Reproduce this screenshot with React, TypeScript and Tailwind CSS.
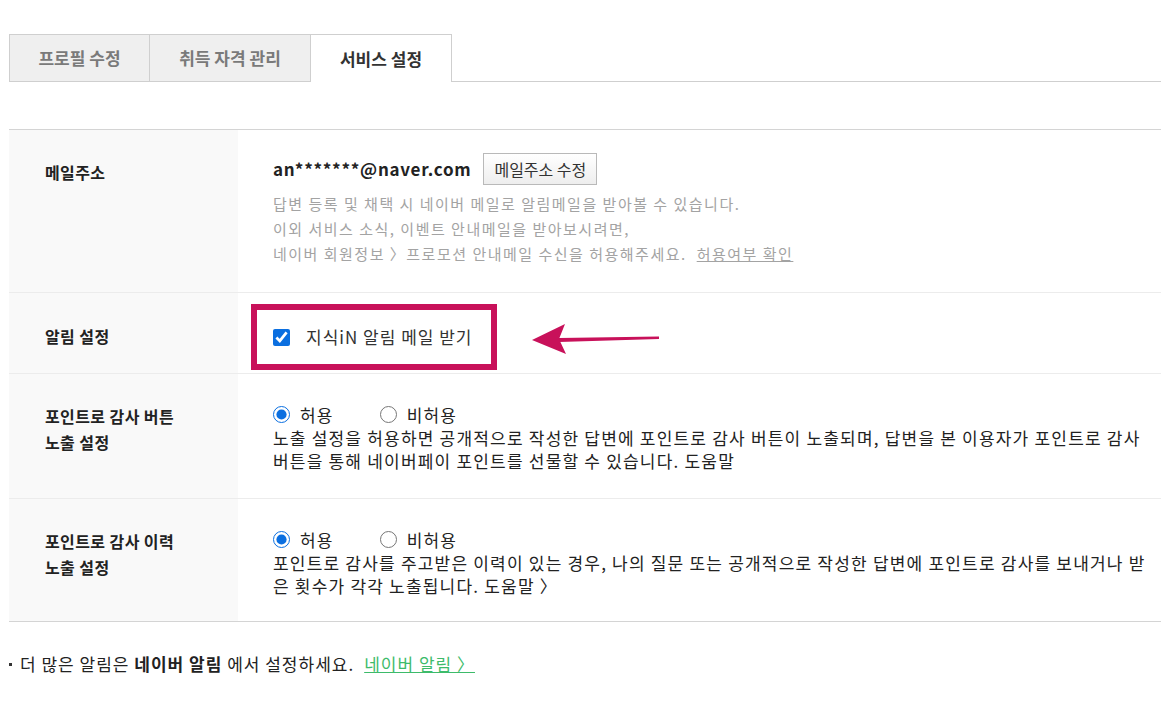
import React from "react";

const font = { fontFamily: '"Noto Sans CJK KR", "Noto Sans", sans-serif' };

const tabs = [
  { label: "프로필 수정", w: "w-[141px]", active: false },
  { label: "취득 자격 관리", w: "w-[161px]", active: false },
  { label: "서비스 설정", w: "w-[141px]", active: true },
];

const Radio = ({ name, checked, label }: { name: string; checked?: boolean; label: string }) => (
  <label className="flex items-center">
    <input
      type="radio"
      name={name}
      defaultChecked={checked}
      className="m-0 h-[17px] w-[17px] accent-[#0b6fe0]"
    />
    <span className="ml-[10px]">{label}</span>
  </label>
);

const Label = ({ children }: { children: React.ReactNode }) => (
  <div className="bg-[#f9f9f9] pl-[36px] text-[16px] font-bold leading-[26px] tracking-[0.4px] text-[#222]">
    {children}
  </div>
);

const App = () => {
  return (
    <div className="min-h-[710px] bg-white" style={font}>
      <div className="w-[1161px] pl-[9px] pt-[34px]">
        {/* tabs */}
        <div className="flex items-end">
          {tabs.map((t, i) => (
            <div
              key={t.label}
              className={
                t.active
                  ? `${t.w} flex h-[48px] items-center justify-center border-t border-r border-[#cfcfcf] bg-white text-[17px] font-bold text-[#333]`
                  : `${t.w} flex h-[48px] items-center justify-center border-t border-b border-r border-[#cfcfcf] bg-[#efefef] text-[17px] font-bold text-[#7a7a7a] ${i === 0 ? "border-l" : ""}`
              }
            >
              {t.label}
            </div>
          ))}
          <div className="h-px flex-1 bg-[#cfcfcf]" />
        </div>

        {/* settings table */}
        <div className="mt-[47px] border-t border-b border-[#d4d4d4]">
          {/* mail */}
          <div className="grid grid-cols-[229px_1fr] border-b border-[#ececec]">
            <Label>
              <div className="pt-[29px]">메일주소</div>
            </Label>
            <div className="pb-[26px] pl-[35px] pt-[23px]">
              <div className="flex h-[32px] items-center">
                <span className="text-[17px] font-semibold tracking-[0.7px] text-[#222]">an*******@naver.com</span>
                <button className="ml-[12px] h-[32px] w-[114px] border border-[#b9b9b9] bg-gradient-to-b from-white to-[#eeeeee] text-[16px] text-[#333]">
                  메일주소 수정
                </button>
              </div>
              <div className="mt-[6px] text-[15px] leading-[25px] tracking-[1.5px] text-[#a3a3a3]">
                <p>답변 등록 및 채택 시 네이버 메일로 알림메일을 받아볼 수 있습니다.</p>
                <p>이외 서비스 소식, 이벤트 안내메일을 받아보시려면,</p>
                <p>
                  네이버 회원정보 〉프로모션 안내메일 수신을 허용해주세요.
                  <a className="ml-[10px] underline">허용여부 확인</a>
                </p>
              </div>
            </div>
          </div>

          {/* notification */}
          <div className="relative grid grid-cols-[229px_1fr] border-b border-[#ececec]">
            <Label>
              <div className="pt-[30px]">알림 설정</div>
            </Label>
            <div className="pb-[3px] pl-[13px] pt-[11px]">
              <div className="flex h-[66px] w-[246px] items-center border-[6px] border-[#c8115a] pl-[16px]">
                <input
                  type="checkbox"
                  defaultChecked
                  className="m-0 h-[17px] w-[17px] accent-[#0b6fe0]"
                />
                <span className="ml-[16px] text-[17px] tracking-[1px] text-[#333]">지식iN 알림 메일 받기</span>
              </div>
            </div>
            <svg
              className="absolute left-[518px] top-[25px]"
              width="140"
              height="40"
              viewBox="0 0 140 40"
            >
              <path d="M132 18.5 L32 20 L32 24 L132 21 Z" fill="#c8115a" />
              <path d="M5 22 L38 6 L32 21 L39 36 Z" fill="#c8115a" />
            </svg>
          </div>

          {/* point button */}
          <div className="grid grid-cols-[229px_1fr] border-b border-[#ececec]">
            <Label>
              <div className="pt-[29px]">
                포인트로 감사 버튼
                <br />
                노출 설정
              </div>
            </Label>
            <div className="pb-[26px] pl-[35px] pt-[29px] text-[17px] leading-[23px] tracking-[1.2px] text-[#222]">
              <div className="flex gap-[46px]">
                <Radio name="btn" checked label="허용" />
                <Radio name="btn" label="비허용" />
              </div>
              <p className="whitespace-nowrap">
                노출 설정을 허용하면 공개적으로 작성한 답변에 포인트로 감사 버튼이 노출되며, 답변을 본 이용자가 포인트로 감사
                <br />
                버튼을 통해 네이버페이 포인트를 선물할 수 있습니다. 도움말
              </p>
            </div>
          </div>

          {/* point history */}
          <div className="grid grid-cols-[229px_1fr]">
            <Label>
              <div className="pt-[29px]">
                포인트로 감사 이력
                <br />
                노출 설정
              </div>
            </Label>
            <div className="pb-[24px] pl-[35px] pt-[29px] text-[17px] leading-[23px] tracking-[1.2px] text-[#222]">
              <div className="flex gap-[46px]">
                <Radio name="hist" checked label="허용" />
                <Radio name="hist" label="비허용" />
              </div>
              <p className="whitespace-nowrap">
                포인트로 감사를 주고받은 이력이 있는 경우, 나의 질문 또는 공개적으로 작성한 답변에 포인트로 감사를 보내거나 받
                <br />
                은 횟수가 각각 노출됩니다. 도움말 〉
              </p>
            </div>
          </div>
        </div>

        {/* footer note */}
        <div className="mt-[31px] flex items-center text-[17px] leading-[22px] tracking-[1px] text-[#222]">
          <span className="mr-[8px] h-[3px] w-[3px] bg-[#333]" />
          <span>
            더 많은 알림은 <b>네이버 알림</b> 에서 설정하세요.
          </span>
          <a className="ml-[10px] text-[#3dbb6a] underline">네이버 알림 〉</a>
        </div>
      </div>
    </div>
  );
};

export default App;
